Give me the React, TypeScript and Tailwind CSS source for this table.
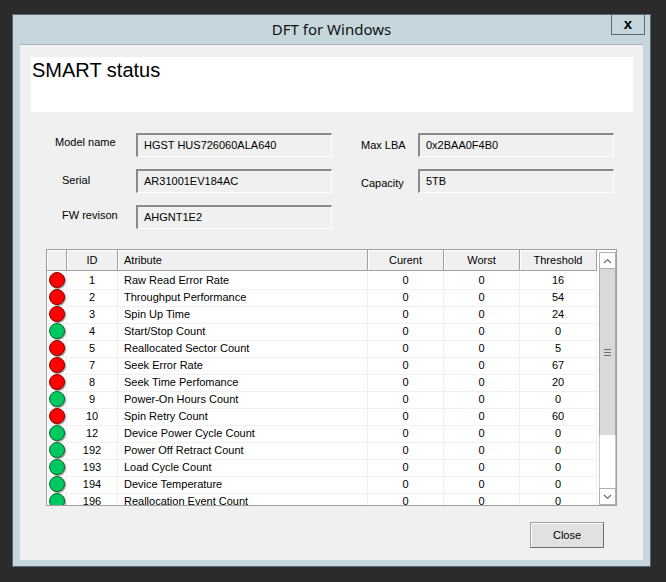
type Row = { id: number; name: string; cur: number; worst: number; thr: number; ok: boolean }

const rows: Row[] = [
  { id: 1, name: 'Raw Read Error Rate', cur: 0, worst: 0, thr: 16, ok: false },
  { id: 2, name: 'Throughput Performance', cur: 0, worst: 0, thr: 54, ok: false },
  { id: 3, name: 'Spin Up Time', cur: 0, worst: 0, thr: 24, ok: false },
  { id: 4, name: 'Start/Stop Count', cur: 0, worst: 0, thr: 0, ok: true },
  { id: 5, name: 'Reallocated Sector Count', cur: 0, worst: 0, thr: 5, ok: false },
  { id: 7, name: 'Seek Error Rate', cur: 0, worst: 0, thr: 67, ok: false },
  { id: 8, name: 'Seek Time Perfomance', cur: 0, worst: 0, thr: 20, ok: false },
  { id: 9, name: 'Power-On Hours Count', cur: 0, worst: 0, thr: 0, ok: true },
  { id: 10, name: 'Spin Retry Count', cur: 0, worst: 0, thr: 60, ok: false },
  { id: 12, name: 'Device Power Cycle Count', cur: 0, worst: 0, thr: 0, ok: true },
  { id: 192, name: 'Power Off Retract Count', cur: 0, worst: 0, thr: 0, ok: true },
  { id: 193, name: 'Load Cycle Count', cur: 0, worst: 0, thr: 0, ok: true },
  { id: 194, name: 'Device Temperature', cur: 0, worst: 0, thr: 0, ok: true },
  { id: 196, name: 'Reallocation Event Count', cur: 0, worst: 0, thr: 0, ok: true },
]

const cols = 'grid grid-cols-[20px_51px_250px_76px_76px_77px]'

function Field({ value }: { value: string }) {
  return (
    <div className="h-[24px] w-[196px] border-t-2 border-l-2 border-b border-r border-t-[#8a8a8a] border-l-[#8a8a8a] border-b-white border-r-white pl-[6px] pt-[3px] leading-[14px]">
      {value}
    </div>
  )
}

function HeadCell({ children, left }: { children?: React.ReactNode; left?: boolean }) {
  return (
    <div
      className={
        'flex h-[21px] items-center border-r border-b border-[#a0a0a0] bg-[#f0f0f0] shadow-[inset_1px_1px_0_#fff] ' +
        (left ? 'pl-[6px]' : 'justify-center')
      }
    >
      {children}
    </div>
  )
}

function Dot({ ok }: { ok: boolean }) {
  return (
    <div
      className={
        'h-[16px] w-[16px] rounded-full border shadow-[1px_1px_0_#a0a0a0] ' +
        (ok ? 'border-[#0a6a2a] bg-[#00c860]' : 'border-[#8a0000] bg-[#ff0000]')
      }
    />
  )
}

function Chevron({ up }: { up?: boolean }) {
  return (
    <svg width="9" height="6" viewBox="0 0 9 6">
      <polyline
        points={up ? '1,5 4.5,1.5 8,5' : '1,1 4.5,4.5 8,1'}
        fill="none"
        stroke="#707070"
        strokeWidth="1.2"
      />
    </svg>
  )
}

function Scrollbar() {
  return (
    <div className="flex w-[19px] flex-col pt-[2px] pl-[2px]">
      <div className="flex h-[17px] items-center justify-center border border-[#b0b0b0] bg-white">
        <Chevron up />
      </div>
      <div className="flex h-[166px] flex-col items-center justify-center gap-[2px] border-x border-[#a8a8a8] bg-[#d9d9d9]">
        <div className="h-px w-[7px] bg-[#6e6e6e]" />
        <div className="h-px w-[7px] bg-[#6e6e6e]" />
        <div className="h-px w-[7px] bg-[#6e6e6e]" />
      </div>
      <div className="h-[53px] border-x border-[#c8c8c8] bg-white" />
      <div className="flex h-[17px] items-center justify-center border border-[#b0b0b0] bg-white">
        <Chevron />
      </div>
    </div>
  )
}

function SmartTable() {
  return (
    <div className="ml-[26px] mt-[20px] flex h-[257px] w-[571px] border border-[#a0a0a0] bg-white">
      <div className="flex w-[550px] flex-col">
        <div className={cols}>
          <HeadCell />
          <HeadCell>ID</HeadCell>
          <HeadCell left>Atribute</HeadCell>
          <HeadCell>Curent</HeadCell>
          <HeadCell>Worst</HeadCell>
          <HeadCell>Threshold</HeadCell>
        </div>
        <div className="h-[234px] overflow-hidden pt-px">
          {rows.map((r) => (
            <div key={r.id} className={cols + ' h-[17px]'}>
              <div className="flex items-center border-r border-b border-[#f0f0f0] pl-[2px]">
                <Dot ok={r.ok} />
              </div>
              <div className="flex items-center justify-center border-r border-b border-[#f0f0f0]">{r.id}</div>
              <div className="flex items-center border-r border-b border-[#f0f0f0] pl-[6px]">{r.name}</div>
              <div className="flex items-center justify-center border-r border-b border-[#f0f0f0]">{r.cur}</div>
              <div className="flex items-center justify-center border-r border-b border-[#f0f0f0]">{r.worst}</div>
              <div className="flex items-center justify-center border-r border-b border-[#f0f0f0]">{r.thr}</div>
            </div>
          ))}
        </div>
      </div>
      <Scrollbar />
    </div>
  )
}

export default function App() {
  return (
    <div className="h-[582px] w-[666px] bg-[#2b2b2b] pl-[12px] pt-[14px] font-['Liberation_Sans',Arial,sans-serif] text-[11px] text-black">
      <div className="flex h-[553px] w-[639px] flex-col border border-[#5b6672] bg-[#c5d7dd]">
        {/* title bar */}
        <div className="grid h-[29px] grid-cols-[1fr_auto_1fr] items-start">
          <div />
          <div className="pt-[4px] font-['Noto_Sans',sans-serif] text-[15px] leading-[20px] text-[#111]">
            DFT for Windows
          </div>
          <div className="flex justify-end pr-[5px]">
            <div className="-mt-px flex h-[21px] w-[34px] items-center justify-center border border-[#5b6672] pb-[2px] text-[15px] font-bold leading-none">
              x
            </div>
          </div>
        </div>

        {/* client area */}
        <div className="mx-[7px] flex h-[516px] flex-col border-t border-[#a9b5bc] bg-[#f0f0f0]">
          <div className="ml-[11px] mt-[12px] h-[55px] w-[602px] bg-white pl-[1px] pt-[2px] text-[20px] leading-[23px]">
            SMART status
          </div>

          <div className="ml-[35px] mt-[21px] grid grid-cols-[81px_225px_57px_196px] grid-rows-[24px_24px_24px] gap-y-[12px]">
            <div className="flex items-center pb-[5px]">Model name</div>
            <Field value="HGST HUS726060ALA640" />
            <div className="flex items-center">Max LBA</div>
            <Field value="0x2BAA0F4B0" />

            <div className="flex items-center pl-[7px] pb-[2px]">Serial</div>
            <Field value="AR31001EV184AC" />
            <div className="flex items-center pt-[4px]">Capacity</div>
            <Field value="5TB" />

            <div className="flex items-center pl-[7px] pb-[3px]">FW revison</div>
            <Field value="AHGNT1E2" />
          </div>

          <SmartTable />

          <div className="mt-[16px] flex justify-end pr-[39px]">
            <button className="h-[26px] w-[74px] border border-[#a0a0a0] border-r-[#6e6e6e] border-b-[#6e6e6e] bg-[#e1e1e1] shadow-[inset_1px_1px_0_#fff] text-[11px]">
              Close
            </button>
          </div>
        </div>
      </div>
    </div>
  )
}
